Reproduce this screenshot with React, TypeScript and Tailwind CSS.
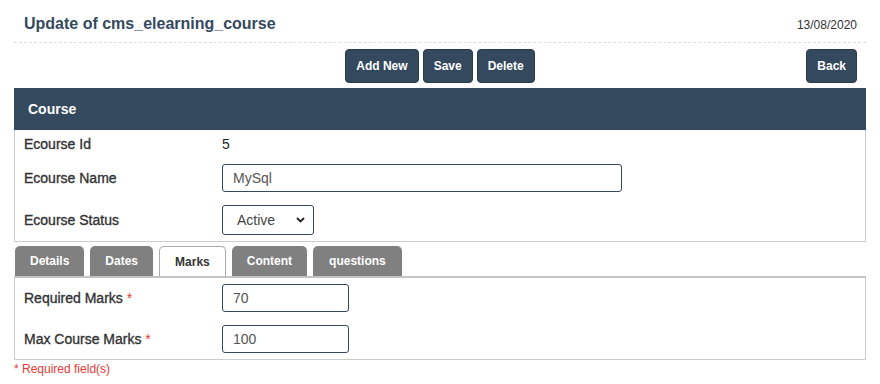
import React, { useState } from 'react';

const tabs = ['Details', 'Dates', 'Marks', 'Content', 'questions'];

const Btn: React.FC<{ label: string }> = ({ label }) => (
  <button className="h-[34px] px-[10px] rounded-[4px] bg-[#34495e] border border-[#2a3a4b] text-white text-[12px] font-bold">
    {label}
  </button>
);

const Row: React.FC<{ label: React.ReactNode; children: React.ReactNode; className?: string }> = ({ label, children, className }) => (
  <div className={`flex items-center ${className ?? ''}`}>
    <div className="w-[198px] text-[14px] text-[#333] [-webkit-text-stroke:0.35px_#333]">{label}</div>
    {children}
  </div>
);

const Req = () => <span className="text-[#e53935] [-webkit-text-stroke:0px]"> *</span>;

export default function App() {
  const [tab, setTab] = useState('Marks');
  const [name, setName] = useState('MySql');
  const [status, setStatus] = useState('Active');
  const [req, setReq] = useState('70');
  const [max, setMax] = useState('100');

  return (
    <div className="bg-white min-h-[384px] px-[14px] font-['Liberation_Sans',Arial,sans-serif] text-[#333]">
      <div className="flex items-baseline justify-between pl-[10px] pr-[9px] pt-[14px] pb-[8px] border-b border-dashed border-[#dddddd]">
        <h1 className="text-[16px] leading-[20px] font-bold text-[#34495e]">Update of cms_elearning_course</h1>
        <span className="text-[12px] text-[#333]">13/08/2020</span>
      </div>

      <div className="grid grid-cols-[1fr_auto_1fr] items-center mt-[6px]">
        <div />
        <div className="flex gap-[4px]">
          <Btn label="Add New" />
          <Btn label="Save" />
          <Btn label="Delete" />
        </div>
        <div className="justify-self-end pr-[9px]">
          <Btn label="Back" />
        </div>
      </div>

      <div className="mt-[5px] h-[42px] bg-[#34495e] flex items-center px-[14px] text-white text-[14px] font-bold">
        Course
      </div>
      <div className="border-x border-b border-[#cccccc] pl-[9px] pb-[6px]">
        <Row label="Ecourse Id" className="h-[28px]">
          <span className="text-[14px] text-[#222]">5</span>
        </Row>
        <Row label="Ecourse Name" className="mt-[6px]">
          <input
            value={name}
            onChange={e => setName(e.target.value)}
            className="w-[400px] h-[28px] border border-[#34495e] rounded-[3px] px-[10px] text-[14px] text-[#555] outline-none"
          />
        </Row>
        <Row label="Ecourse Status" className="mt-[13px]">
          <div className="relative w-[92px] h-[30px]">
            <select
              value={status}
              onChange={e => setStatus(e.target.value)}
              className="appearance-none w-full h-full border border-[#34495e] rounded-[3px] pl-[14px] text-[14px] text-[#444] bg-white outline-none"
            >
              <option>Active</option>
              <option>Inactive</option>
            </select>
            <svg className="absolute right-[9px] top-[12px] pointer-events-none" width="9" height="6" viewBox="0 0 9 6">
              <path d="M1 1l3.5 3.5L8 1" fill="none" stroke="#222" strokeWidth="1.8" />
            </svg>
          </div>
        </Row>
      </div>

      <div className="mt-[4px] flex pl-[1px] h-[30px]">
        {tabs.map((t, i) => (
          <button
            key={t}
            onClick={() => setTab(t)}
            className={`${i > 0 ? 'ml-[6px]' : ''} px-[15px] rounded-t-[5px] text-[12px] font-bold ${
              t === 'questions' ? 'px-[16px]' : ''
            } ${
              tab === t
                ? 'bg-white border border-b-0 border-[#aaaaaa] text-[#333]'
                : 'bg-[#808080] text-white'
            }`}
          >
            {t}
          </button>
        ))}
      </div>
      <div className="border border-t-2 border-[#cccccc] border-t-[#c4c4c4] pl-[9px] pt-[6px] pb-[6px]">
        <Row label={<>Required Marks<Req /></>}>
          <input
            value={req}
            onChange={e => setReq(e.target.value)}
            className="w-[127px] h-[28px] border border-[#34495e] rounded-[3px] px-[10px] text-[14px] text-[#555] outline-none"
          />
        </Row>
        <Row label={<>Max Course Marks<Req /></>} className="mt-[13px]">
          <input
            value={max}
            onChange={e => setMax(e.target.value)}
            className="w-[127px] h-[28px] border border-[#34495e] rounded-[3px] px-[10px] text-[14px] text-[#555] outline-none"
          />
        </Row>
      </div>
      <div className="text-[12px] text-[#e53935] mt-0">* Required field(s)</div>
    </div>
  );
}
